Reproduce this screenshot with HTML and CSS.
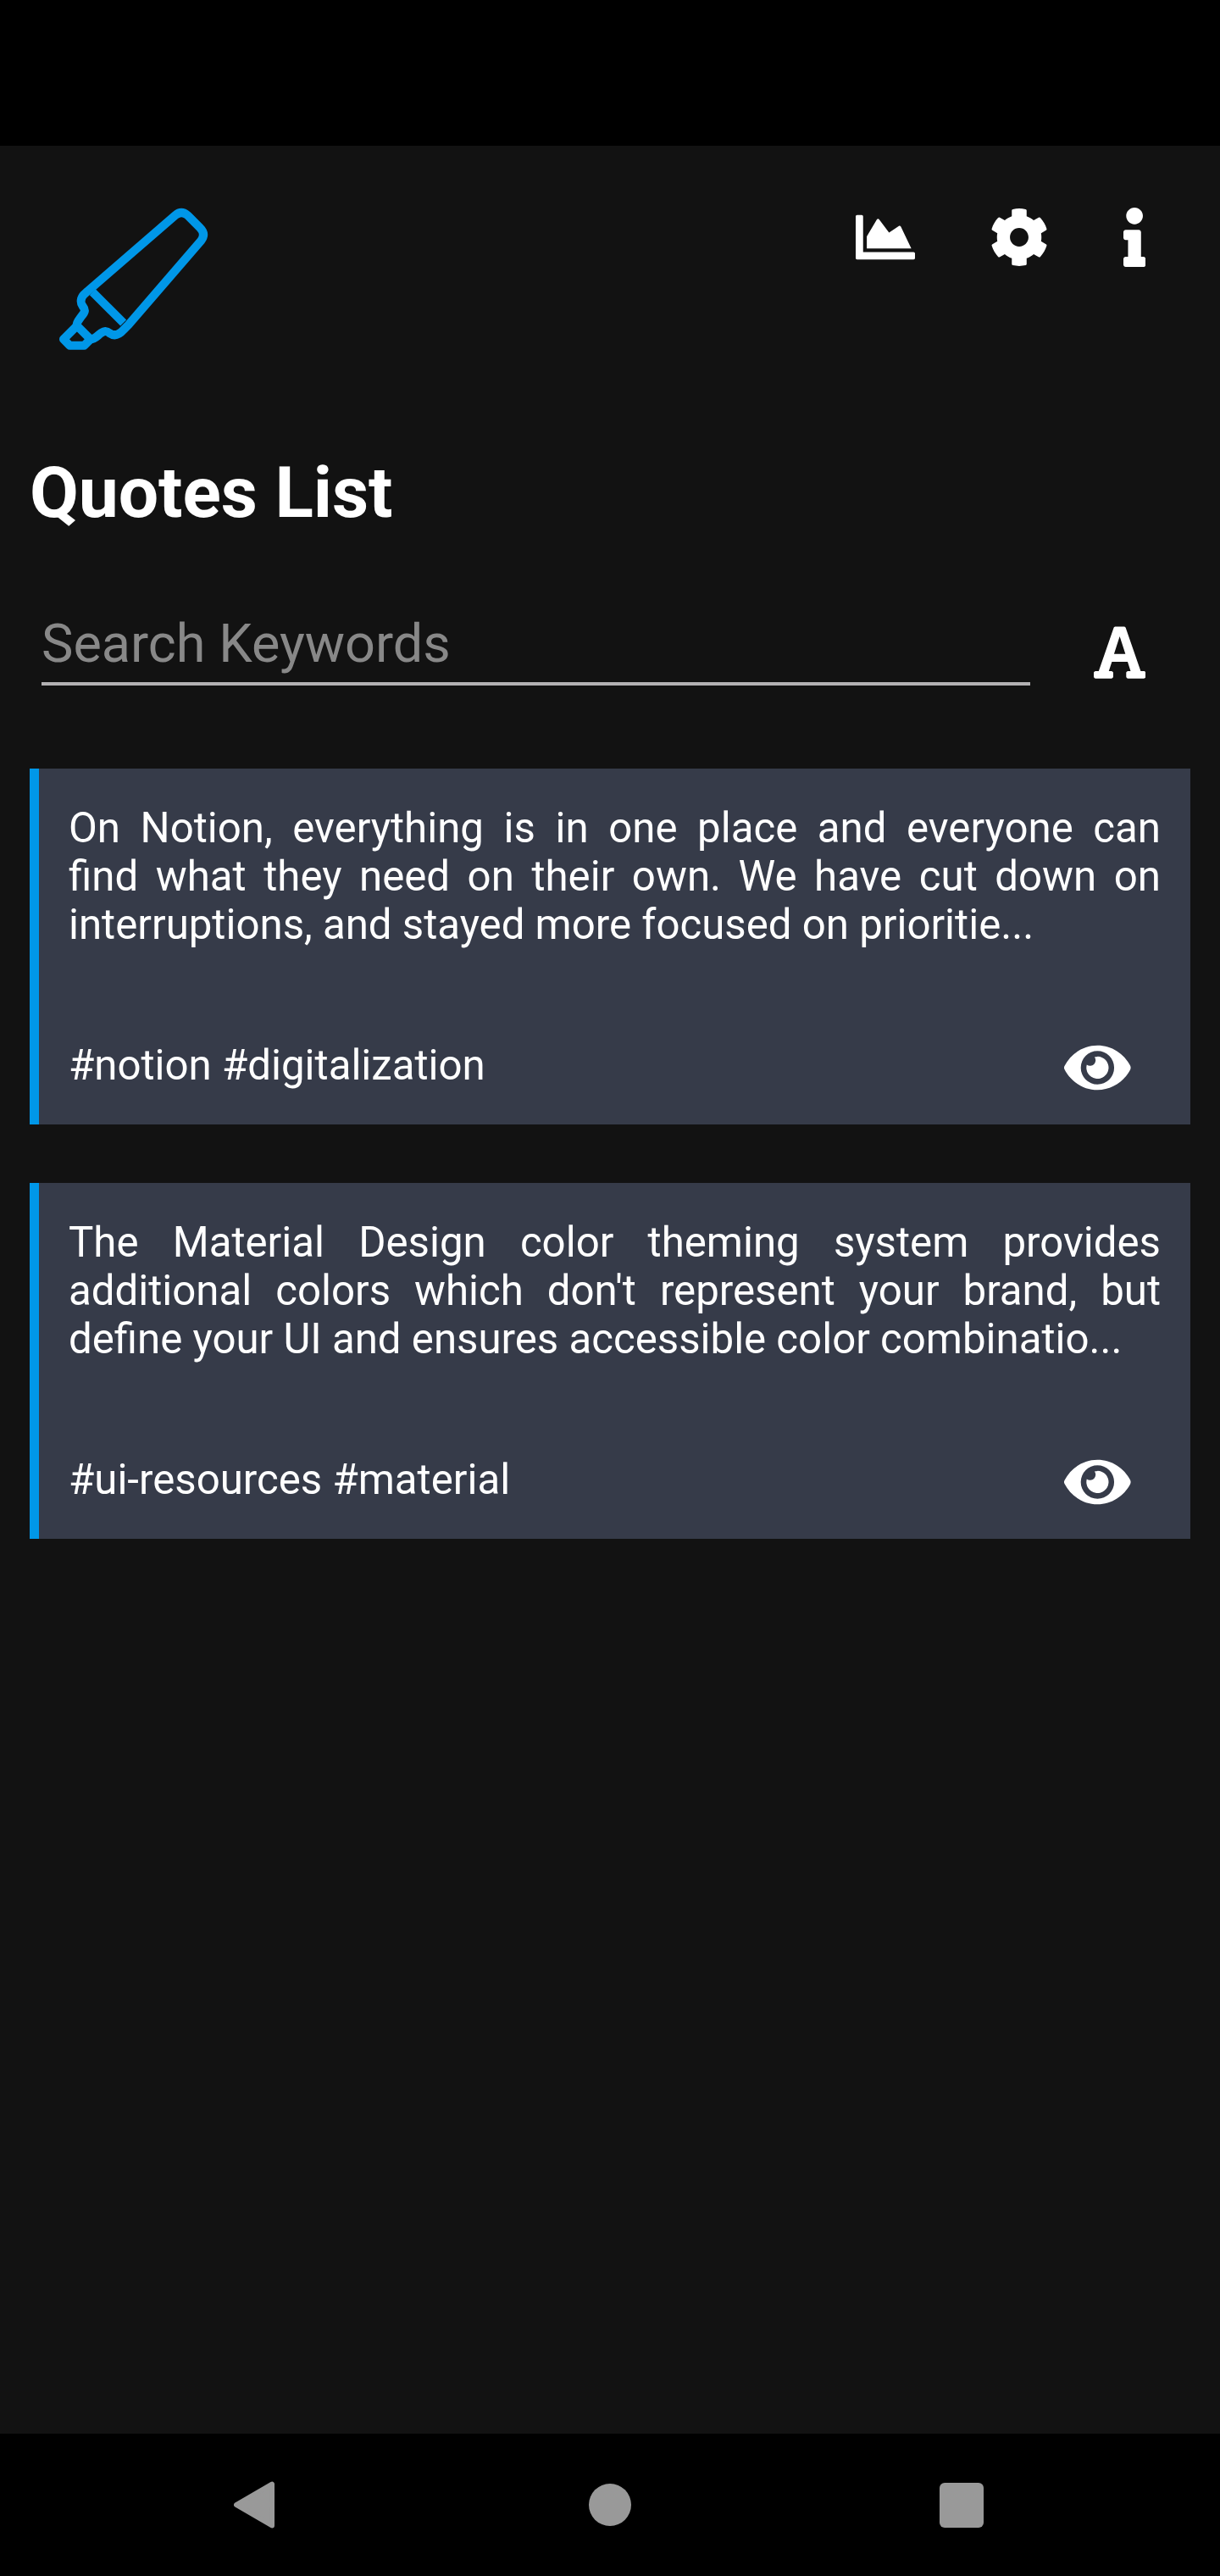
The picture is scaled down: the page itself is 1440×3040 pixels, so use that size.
FILE: index.html
```html
<!DOCTYPE html>
<html lang="en">
<head>
<meta charset="utf-8">
<title>Quotes List</title>
<link rel="stylesheet" href="styles.css">
</head>
<body>
<svg class="sprite" aria-hidden="true">
  <symbol id="eye" viewBox="0 0 576 512"><path d="M572.52 241.4C518.29 135.59 410.93 64 288 64S57.68 135.64 3.48 241.41a32.35 32.35 0 0 0 0 29.19C57.71 376.41 165.07 448 288 448s230.32-71.64 284.52-177.41a32.35 32.35 0 0 0 0-29.19zM288 400a144 144 0 1 1 144-144 143.93 143.93 0 0 1-144 144zm0-240a95.31 95.31 0 0 0-25.31 3.79 47.85 47.85 0 0 1-66.9 66.9A95.78 95.78 0 1 0 288 160z"/></symbol>
</svg>
<div class="screen">
  <div class="status-bar"></div>
  <main class="app">
    <header class="header">
      <svg class="logo" viewBox="90 75 528 507" aria-label="Highlighter">
        <path d="M190 371L501 102Q522 84 544 102L588 146Q610 168 592 192L335 490L318 507C302 525 286 532 269 520C256 509 249 512 238 519C224 529 215 542 200 541L152 493C150 481 160 472 169 459C182 444 183 437 173 424C163 411 166 394 178 382Z"/>
        <path d="M208 374L317 483"/>
        <path d="M150 496L105 541L127 563.500H178L199 542"/>
      </svg>
      <nav class="actions">
        <svg class="icon" viewBox="0 0 512 512"><path d="M500 384c6.600 0 12 5.400 12 12v40c0 6.600-5.400 12-12 12H12c-6.600 0-12-5.400-12-12V76c0-6.600 5.400-12 12-12h40c6.600 0 12 5.400 12 12v308h436zM372.700 159.500L288 216l-85.300-113.700c-5.100-6.800-15.500-6.300-19.900 1L96 248v104h384l-89.900-187.800c-3.200-6.500-11.400-8.700-17.400-4.700z"/></svg>
        <svg class="icon" viewBox="0 0 512 512"><path d="M487.400 315.700l-42.600-24.600c4.300-23.200 4.300-47 0-70.200l42.600-24.600c4.900-2.800 7.100-8.600 5.500-14-11.100-35.600-30-67.800-54.700-94.600-3.800-4.100-10-5.100-14.800-2.300L380.800 110c-17.900-15.400-38.500-27.300-60.800-35.100V25.800c0-5.600-3.900-10.500-9.400-11.700-36.700-8.200-74.300-7.800-109.200 0-5.500 1.200-9.400 6.100-9.400 11.700V75c-22.200 7.900-42.800 19.800-60.800 35.100L88.700 85.500c-4.900-2.800-11-1.900-14.800 2.300-24.700 26.700-43.600 58.900-54.700 94.600-1.700 5.400.6 11.200 5.500 14L67.300 221c-4.300 23.200-4.300 47 0 70.200l-42.600 24.600c-4.900 2.800-7.100 8.600-5.500 14 11.100 35.600 30 67.800 54.700 94.600 3.800 4.100 10 5.100 14.800 2.300l42.600-24.600c17.900 15.400 38.500 27.300 60.800 35.100v49.200c0 5.600 3.900 10.500 9.400 11.700 36.700 8.200 74.300 7.800 109.200 0 5.500-1.200 9.400-6.100 9.400-11.700v-49.200c22.200-7.900 42.800-19.800 60.800-35.100l42.600 24.600c4.900 2.800 11 1.900 14.800-2.300 24.700-26.700 43.600-58.900 54.700-94.600 1.500-5.500-.7-11.300-5.600-14.100zM256 336c-44.100 0-80-35.900-80-80s35.900-80 80-80 80 35.900 80 80-35.900 80-80 80z"/></svg>
        <svg class="icon icon-info" viewBox="0 0 192 512"><path d="M20 424.229h20V279.771H20c-11.046 0-20-8.954-20-20V212c0-11.046 8.954-20 20-20h112c11.046 0 20 8.954 20 20v212.229h20c11.046 0 20 8.954 20 20V492c0 11.046-8.954 20-20 20H20c-11.046 0-20-8.954-20-20v-47.771c0-11.046 8.954-20 20-20zM96 0C56.235 0 24 32.235 24 72s32.235 72 72 72 72-32.235 72-72S135.764 0 96 0z"/></svg>
      </nav>
    </header>
    <h1 class="title">Quotes List</h1>
    <div class="search">
      <div class="search-field">Search Keywords</div>
      <svg class="icon icon-font" viewBox="0 0 448 512"><path d="M432 416h-26.700L275.500 42.700c-2.200-6.400-8.300-10.700-15.100-10.700h-72.800c-6.800 0-12.900 4.300-15.100 10.700L42.700 416H16c-8.800 0-16 7.200-16 16v32c0 8.800 7.200 16 16 16h136c8.800 0 16-7.200 16-16v-32c0-8.800-7.200-16-16-16h-22L156.500 336h136L318 416h-22c-8.800 0-16 7.200-16 16v32c0 8.800 7.200 16 16 16h136c8.800 0 16-7.200 16-16v-32c0-8.800-7.200-16-16-16zM175 268L224 117l49 151z"/></svg>
    </div>
    <section class="quotes">
      <article class="quote">
        <p class="quote-text">On Notion, everything is in one place and everyone can find&nbsp;what they need on their own. We have cut down on interruptions, and stayed more focused on prioritie...</p>
        <div class="quote-footer"><span>#notion #digitalization</span><svg class="eye"><use href="#eye"/></svg></div>
      </article>
      <article class="quote">
        <p class="quote-text">The Material Design color theming system provides additional colors which don't represent your brand, but define your UI and ensures accessible color combinatio...</p>
        <div class="quote-footer"><span>#ui-resources #material</span><svg class="eye"><use href="#eye"/></svg></div>
      </article>
    </section>
  </main>
  <footer class="nav-bar">
    <svg class="nav-back" viewBox="0 0 50 56"><path d="M46 3V53L3 28Z"/></svg>
    <span class="nav-home"></span>
    <span class="nav-recent"></span>
  </footer>
</div>
</body>
</html>
```
FILE: styles.css
```css
* {
  box-sizing: border-box;
}

body {
  margin: 0;
  background: #121212;
  color: #fff;
  font-family: Roboto, sans-serif;
}

.sprite {
  display: none;
}

.screen {
  display: flex;
  flex-direction: column;
  width: 1440px;
  height: 3040px;
}

.status-bar {
  height: 172px;
  background: #000;
}

.app {
  flex: 1;
  padding: 0 35px;
}

.header {
  display: flex;
  justify-content: space-between;
  align-items: flex-start;
  height: 361px;
  padding: 72.500px 52.750px 0 35px;
}

.logo {
  width: 176px;
  height: 169px;
  fill: none;
  stroke: #0097e8;
  stroke-width: 30;
  stroke-linejoin: round;
}

.actions {
  display: flex;
  gap: 88px;
}

.icon {
  display: block;
  width: 70px;
  height: 70px;
  fill: #fff;
}

.icon-info {
  width: 26.250px;
}

.title {
  margin: 0;
  font-size: 84px;
  line-height: 98px;
  font-weight: 700;
  letter-spacing: -0.1px;
}

.search {
  display: flex;
  justify-content: space-between;
  align-items: flex-start;
  height: 276px;
  padding: 91px 52.750px 0 14px;
}

.search-field {
  width: 1167px;
  height: 87px;
  padding-top: 1px;
  border-bottom: 4px solid #b3b1b3;
  color: #888;
  font-size: 63px;
  line-height: 74px;
}

.icon-font {
  width: 61.250px;
  margin-top: 13px;
}

.quotes {
  display: grid;
  gap: 69px;
}

.quote {
  display: flex;
  flex-direction: column;
  justify-content: space-between;
  height: 420px;
  padding: 42px 35px 41px 35px;
  border-left: 11px solid #0097e8;
  background: #363b49;
  font-size: 49.200px;
  line-height: 57px;
}

.quote-text {
  margin: 0;
  text-align: justify;
}

.quote-footer {
  display: flex;
  justify-content: space-between;
  padding-right: 35px;
}

.eye {
  width: 78.750px;
  height: 70px;
  margin: -4.500px 0 -8.500px;
  fill: #fff;
}

.nav-bar {
  display: flex;
  align-items: center;
  height: 168px;
  padding-left: 276px;
  background: #000;
}

.nav-back {
  width: 49px;
  height: 56px;
  fill: #999;
  stroke: #999;
  stroke-width: 6;
  stroke-linejoin: round;
}

.nav-home {
  width: 50px;
  height: 50px;
  margin-left: 370px;
  border-radius: 50%;
  background: #999;
}

.nav-recent {
  width: 52px;
  height: 53px;
  margin-left: 364px;
  border-radius: 6px;
  background: #999;
}
```
